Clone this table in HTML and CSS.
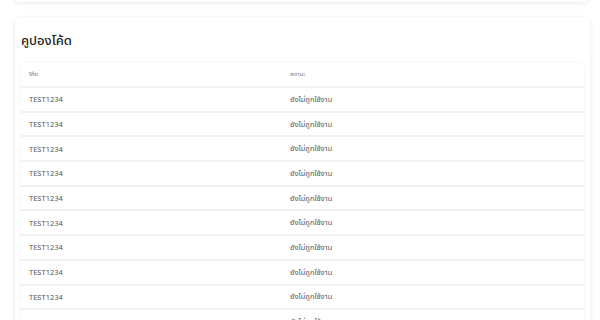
FILE: index.html
```html
<!DOCTYPE html>
<html lang="th">
<head>
<meta charset="utf-8">
<link rel="stylesheet" href="styles.css">
</head>
<body>
<div class="page">
  <div class="card prev"></div>
  <div class="card main">
    <h2 class="title">คูปองโค้ด</h2>
    <div class="table">
      <div class="row head"><div class="c1">โค้ด</div><div class="c2">สถานะ</div></div>
      <div class="row"><div class="c1">TEST1234</div><div class="c2">ยังไม่ถูกใช้งาน</div></div>
      <div class="row"><div class="c1">TEST1234</div><div class="c2">ยังไม่ถูกใช้งาน</div></div>
      <div class="row"><div class="c1">TEST1234</div><div class="c2">ยังไม่ถูกใช้งาน</div></div>
      <div class="row"><div class="c1">TEST1234</div><div class="c2">ยังไม่ถูกใช้งาน</div></div>
      <div class="row"><div class="c1">TEST1234</div><div class="c2">ยังไม่ถูกใช้งาน</div></div>
      <div class="row"><div class="c1">TEST1234</div><div class="c2">ยังไม่ถูกใช้งาน</div></div>
      <div class="row"><div class="c1">TEST1234</div><div class="c2">ยังไม่ถูกใช้งาน</div></div>
      <div class="row"><div class="c1">TEST1234</div><div class="c2">ยังไม่ถูกใช้งาน</div></div>
      <div class="row"><div class="c1">TEST1234</div><div class="c2">ยังไม่ถูกใช้งาน</div></div>
      <div class="row"><div class="c1">TEST1234</div><div class="c2">ยังไม่ถูกใช้งาน</div></div>
    </div>
  </div>
</div>
</body>
</html>
```
FILE: styles.css
```css
html, body {
  margin: 0;
  padding: 0;
  background: #ffffff;
  font-family: "Noto Sans", "Noto Sans Thai", sans-serif;
  color: #333;
  overflow: hidden;
}
.page {
  padding: 0 10px 0 15px;
}
.card {
  background: #fff;
  border-radius: 4px;
  box-shadow: 0 1px 4px rgba(0,0,0,0.10);
}
.prev {
  height: 20px;
  margin-top: -18px;
  margin-right: 2px;
}
.main {
  margin-top: 15px;
  padding: 10px 6px 0 6px;
}
.title {
  margin: 0;
  font-size: 13px;
  font-weight: 500;
  line-height: 26px;
  color: #222;
  padding-top: 0;
}
.table {
  margin-top: 10px;
  border-radius: 4px;
  box-shadow: 0 0 3px rgba(0,0,0,0.08);
  overflow: hidden;
}
.row {
  display: flex;
  height: 22.7px;
  align-items: center;
  border-bottom: 2px solid #f1f1f1;
  font-size: 7.5px;
  color: #555;
}
.row.head {
  height: 23px;
  font-size: 6px;
  color: #777;
}
.c1 {
  width: 261px;
  padding-left: 8px;
}
.c2 {
  flex: 1;
}
```
